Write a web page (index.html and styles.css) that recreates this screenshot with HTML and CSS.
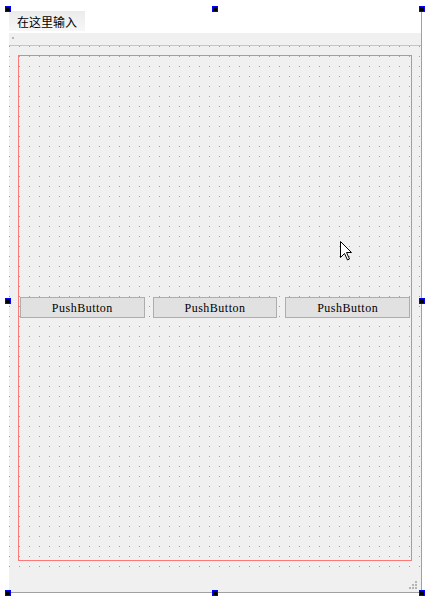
FILE: index.html
```html
<!DOCTYPE html>
<html>
<head>
<meta charset="utf-8">
<link rel="stylesheet" href="styles.css">
</head>
<body>
<div class="form">
  <div class="menubar"><div class="menu-item">在这里输入</div></div>
  <div class="toolbar"><span class="grip-dot"></span></div>
  <div class="central">
    <div class="layout">
      <div class="btn"><span class="btn-text">PushButton</span></div>
      <div class="btn"><span class="btn-text">PushButton</span></div>
      <div class="btn"><span class="btn-text">PushButton</span></div>
    </div>
  </div>
  <div class="statusbar">
    <svg class="sizegrip" width="9" height="9" viewBox="0 0 9 9">
      <g fill="#b4b4b4">
        <rect x="6" y="0" width="2" height="2"/>
        <rect x="3" y="3" width="2" height="2"/><rect x="6" y="3" width="2" height="2"/>
        <rect x="0" y="6" width="2" height="2"/><rect x="3" y="6" width="2" height="2"/><rect x="6" y="6" width="2" height="2"/>
      </g>
    </svg>
  </div>
</div>
<span class="handle h-tl"></span><span class="handle h-tm"></span><span class="handle h-tr"></span>
<span class="handle h-ml"></span><span class="handle h-mr"></span>
<span class="handle h-bl"></span><span class="handle h-bm"></span><span class="handle h-br"></span>
<svg class="cursor" width="13" height="20" viewBox="0 0 13 20">
  <path d="M0.5 0.5 L0.5 16.5 L4.5 12.5 L7.5 19 L9.5 18 L6.5 11.5 L11.5 11.5 Z" fill="#fff" stroke="#000" stroke-width="1" stroke-linejoin="miter"/>
</svg>
</body>
</html>
```
FILE: styles.css
```css
html, body {
  margin: 0;
  padding: 0;
  background: #ffffff;
}
body {
  padding: 10px 0 0 9px;
  width: 429px;
  height: 596px;
  box-sizing: border-box;
  position: relative;
  overflow: hidden;
}
.form {
  width: 412px;
  height: 582px;
  border-right: 1px solid #a0a0a0;
  border-bottom: 1px solid #a0a0a0;
  background: #f0f0f0;
  display: flex;
  flex-direction: column;
}
.menubar {
  height: 23px;
  background: #ffffff;
  box-sizing: border-box;
  padding-top: 1px;
  flex: none;
}
.menu-item {
  width: 76px;
  height: 20px;
  box-sizing: border-box;
  padding: 1px 0 0 8px;
  background: linear-gradient(#ebebeb, #f7f7f7);
  font-family: "Noto Sans CJK SC", "Noto Sans", sans-serif;
  font-size: 12px;
  line-height: 19px;
  color: #000;
}
.toolbar {
  height: 12px;
  border-bottom: 1px solid #c4c4c4;
  background: #f0f0f0;
  flex: none;
  display: flex;
  align-items: center;
  padding-left: 3px;
}
.grip-dot {
  width: 2px;
  height: 2px;
  background: #b8b8b8;
  margin-top: -2px;
}
.central {
  height: 524px;
  flex: none;
  box-sizing: border-box;
  padding: 9px;
  background-color: #a0a0a0;
  background-image:
    linear-gradient(90deg, #f0f0f0 9px, transparent 9px),
    linear-gradient(#f0f0f0 9px, transparent 9px);
  background-size: 10px 10px;
  background-position: 1px 1px;
}
.layout {
  height: 100%;
  box-sizing: border-box;
  border: 1px solid #ff7878;
  display: flex;
  align-items: center;
  gap: 8px;
  padding: 1px 1px 2px 1px;
}
.btn {
  flex: 1;
  height: 21px;
  box-sizing: border-box;
  border: 1px solid #adadad;
  background: #e1e1e1;
  display: flex;
  align-items: center;
  justify-content: center;
  padding-top: 1px;
}
.btn-text {
  font-family: "Liberation Serif", serif;
  font-size: 12px;
  line-height: 14px;
  color: #000;
  letter-spacing: 0.5px;
}
.statusbar {
  flex: 1;
  display: flex;
  justify-content: flex-end;
  align-items: flex-end;
  padding: 0 3px 2px 0;
}
.sizegrip {
  display: block;
}
.handle {
  position: absolute;
  width: 6px;
  height: 6px;
  box-sizing: border-box;
  border: 1px solid #0000ff;
  background: #000;
}
.h-tl { left: 5px; top: 6px; }
.h-tm { left: 212px; top: 6px; }
.h-tr { left: 419px; top: 6px; }
.h-ml { left: 5px; top: 298px; }
.h-mr { left: 419px; top: 298px; }
.h-bl { left: 5px; top: 590px; }
.h-bm { left: 212px; top: 590px; }
.h-br { left: 419px; top: 590px; }
.cursor {
  position: absolute;
  left: 340px;
  top: 241px;
}
```
